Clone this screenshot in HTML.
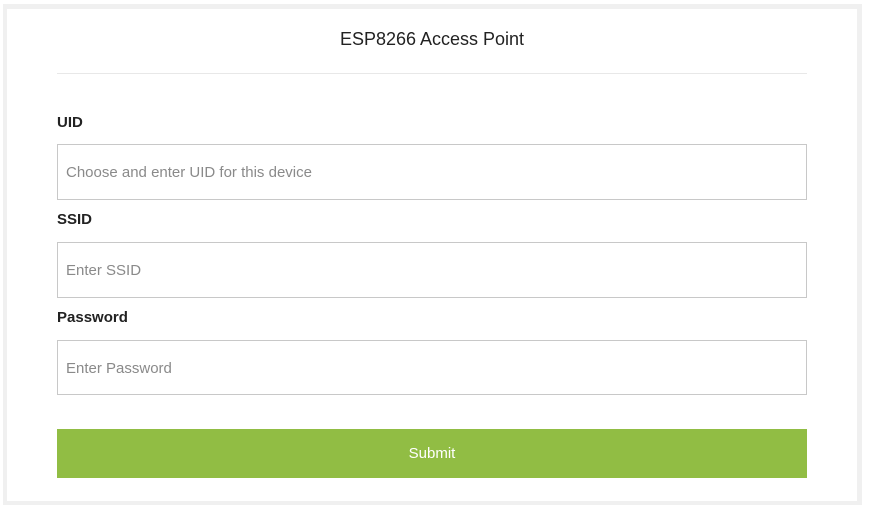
<!DOCTYPE html>
<html><head><style>
body{margin:0;width:870px;height:509px;background:#fff;font-family:"Liberation Sans",sans-serif;position:relative;overflow:hidden}
.frame{position:absolute;left:3px;top:4px;width:859px;height:501px;background:#f0f0f0}
.card{position:absolute;left:7px;top:9px;width:850px;height:492px;background:#fff}
.t{position:absolute;left:0;width:864px;top:29px;text-align:center;font-size:18px;color:#222}
.hr{position:absolute;left:57px;top:73px;width:750px;height:1px;background:#e8e8e8}
.l{position:absolute;left:57px;font-weight:bold;font-size:15px;color:#222}
.i{position:absolute;left:57px;border:1px solid #c8c8c8;font-size:15px;color:#8a8a8a;box-sizing:content-box;padding-left:8px;width:740px}
.b{position:absolute;left:57px;top:429px;width:750px;height:49px;background:#91bd44;color:#fff;font-size:15px;text-align:center;line-height:50px}
</style></head><body>
<div class="frame"></div><div class="card"></div>
<div class="t">ESP8266 Access Point</div>
<div class="hr"></div>
<div class="l" style="top:114px">UID</div>
<div class="i" style="top:144px;height:54px;line-height:56px">Choose and enter UID for this device</div>
<div class="l" style="top:211px">SSID</div>
<div class="i" style="top:242px;height:54px;line-height:56px">Enter SSID</div>
<div class="l" style="top:309px">Password</div>
<div class="i" style="top:340px;height:53px;line-height:55px">Enter Password</div>
<div class="b">Submit</div>
</body></html>
